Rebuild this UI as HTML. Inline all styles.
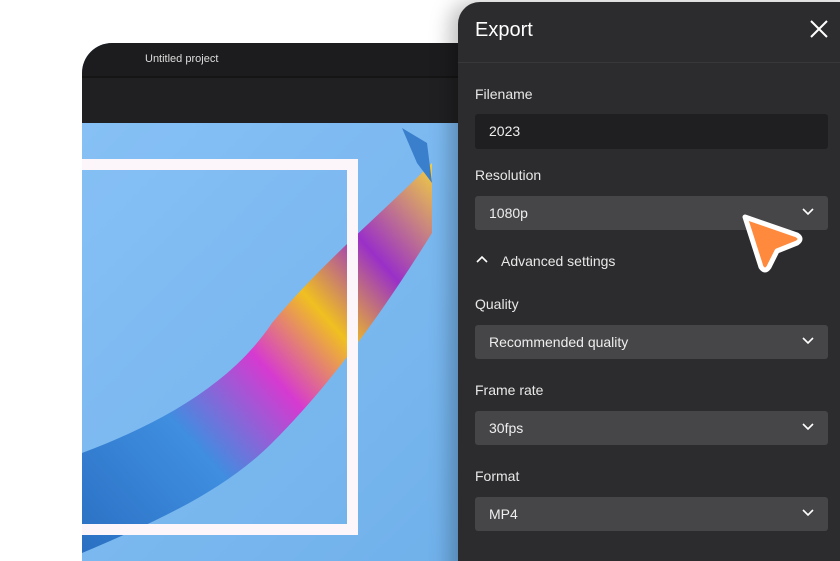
<!DOCTYPE html>
<html><head><style>
html,body{margin:0;width:840px;height:561px;overflow:hidden}
body{background:#fff;font-family:"Liberation Sans",sans-serif;position:relative}
.ed{position:absolute;left:82px;top:43px;width:420px;height:518px;border-top-left-radius:30px;overflow:hidden;background:#7db8ee}
.tb{position:absolute;left:0;top:0;right:0;height:33px;background:#1c1c1e;border-bottom:2px solid #151516}
.tb span{position:absolute;left:63px;top:10px;color:#ddd;font-size:11px}
.tool{position:absolute;left:0;top:35px;right:0;height:45px;background:#202022}
.cv{position:absolute;left:0;top:80px;right:0;bottom:0;background:linear-gradient(135deg,#86c0f5,#6fb0ea)}
.fr{position:absolute;left:-20px;top:36px;width:274px;height:354px;border:11px solid #fcf6fa}
.pn{position:absolute;left:458px;top:2px;width:400px;height:580px;background:#2c2c2e;border-top-left-radius:22px;box-shadow:-8px 0 20px rgba(0,0,0,.25)}
.h{position:absolute;left:17px;top:17px;color:#fff;font-size:20px}
.sep{position:absolute;left:0;right:0;top:60px;height:1px;background:#38383a}
.lb{position:absolute;left:17px;color:#e8e8e8;font-size:14px}
.in{position:absolute;left:17px;width:353px;height:34px;border-radius:3px;background:#464648;color:#eee;font-size:14px;line-height:34px;text-indent:14px}
.in svg{position:absolute;right:14px;top:12px}
</style></head><body>
<div class="ed">
<div class="tb"><span>Untitled project</span></div>
<div class="tool"></div>
<div class="cv">
<svg width="420" height="460" style="position:absolute;left:0;top:0">
<defs><linearGradient id="g" x1="0" y1="1" x2="1" y2="0">
<stop offset="0" stop-color="#2a6fc2"/><stop offset=".3" stop-color="#3f8ee0"/><stop offset=".5" stop-color="#d63ad0"/><stop offset=".65" stop-color="#f0c020"/><stop offset=".8" stop-color="#9a30c8"/><stop offset="1" stop-color="#f2d040"/></linearGradient></defs>
<path d="M0 330 C80 300 150 260 190 200 C240 140 300 90 350 40 L350 110 C300 190 250 260 190 320 C140 370 70 400 0 430Z" fill="url(#g)"/>
<path d="M320 5 L345 20 L350 60 L335 40Z" fill="#3a7fcc"/>
</svg>
<div class="fr"></div>
</div>
</div>
<div class="pn">
<div class="h">Export</div>
<svg style="position:absolute;left:352px;top:18px" width="18" height="18"><path d="M1 1L17 17M17 1L1 17" stroke="#fff" stroke-width="2"/></svg>
<div class="sep"></div>
<div class="lb" style="top:84px">Filename</div>
<div class="in" style="top:112px;background:#1f1f21;height:35px;line-height:35px">2023</div>
<div class="lb" style="top:165px">Resolution</div>
<div class="in" style="top:194px">1080p<svg width="12" height="8"><path d="M1 1L6 6L11 1" stroke="#fff" stroke-width="1.6" fill="none"/></svg></div>
<svg style="position:absolute;left:18px;top:253px" width="12" height="8"><path d="M1 7L6 2L11 7" stroke="#fff" stroke-width="1.6" fill="none"/></svg>
<div class="lb" style="top:251px;left:43px">Advanced settings</div>
<div class="lb" style="top:294px">Quality</div>
<div class="in" style="top:323px">Recommended quality<svg width="12" height="8"><path d="M1 1L6 6L11 1" stroke="#fff" stroke-width="1.6" fill="none"/></svg></div>
<div class="lb" style="top:380px">Frame rate</div>
<div class="in" style="top:409px">30fps<svg width="12" height="8"><path d="M1 1L6 6L11 1" stroke="#fff" stroke-width="1.6" fill="none"/></svg></div>
<div class="lb" style="top:466px">Format</div>
<div class="in" style="top:495px">MP4<svg width="12" height="8"><path d="M1 1L6 6L11 1" stroke="#fff" stroke-width="1.6" fill="none"/></svg></div>
</div>
<svg style="position:absolute;left:735px;top:205px" width="75" height="70"><path d="M10 12 L62 30 Q68 34 62 38 L42 46 L34 62 Q30 68 26 62 Z" fill="#ff8a3d" stroke="#fff" stroke-width="5" stroke-linejoin="round"/></svg>
</body></html>
